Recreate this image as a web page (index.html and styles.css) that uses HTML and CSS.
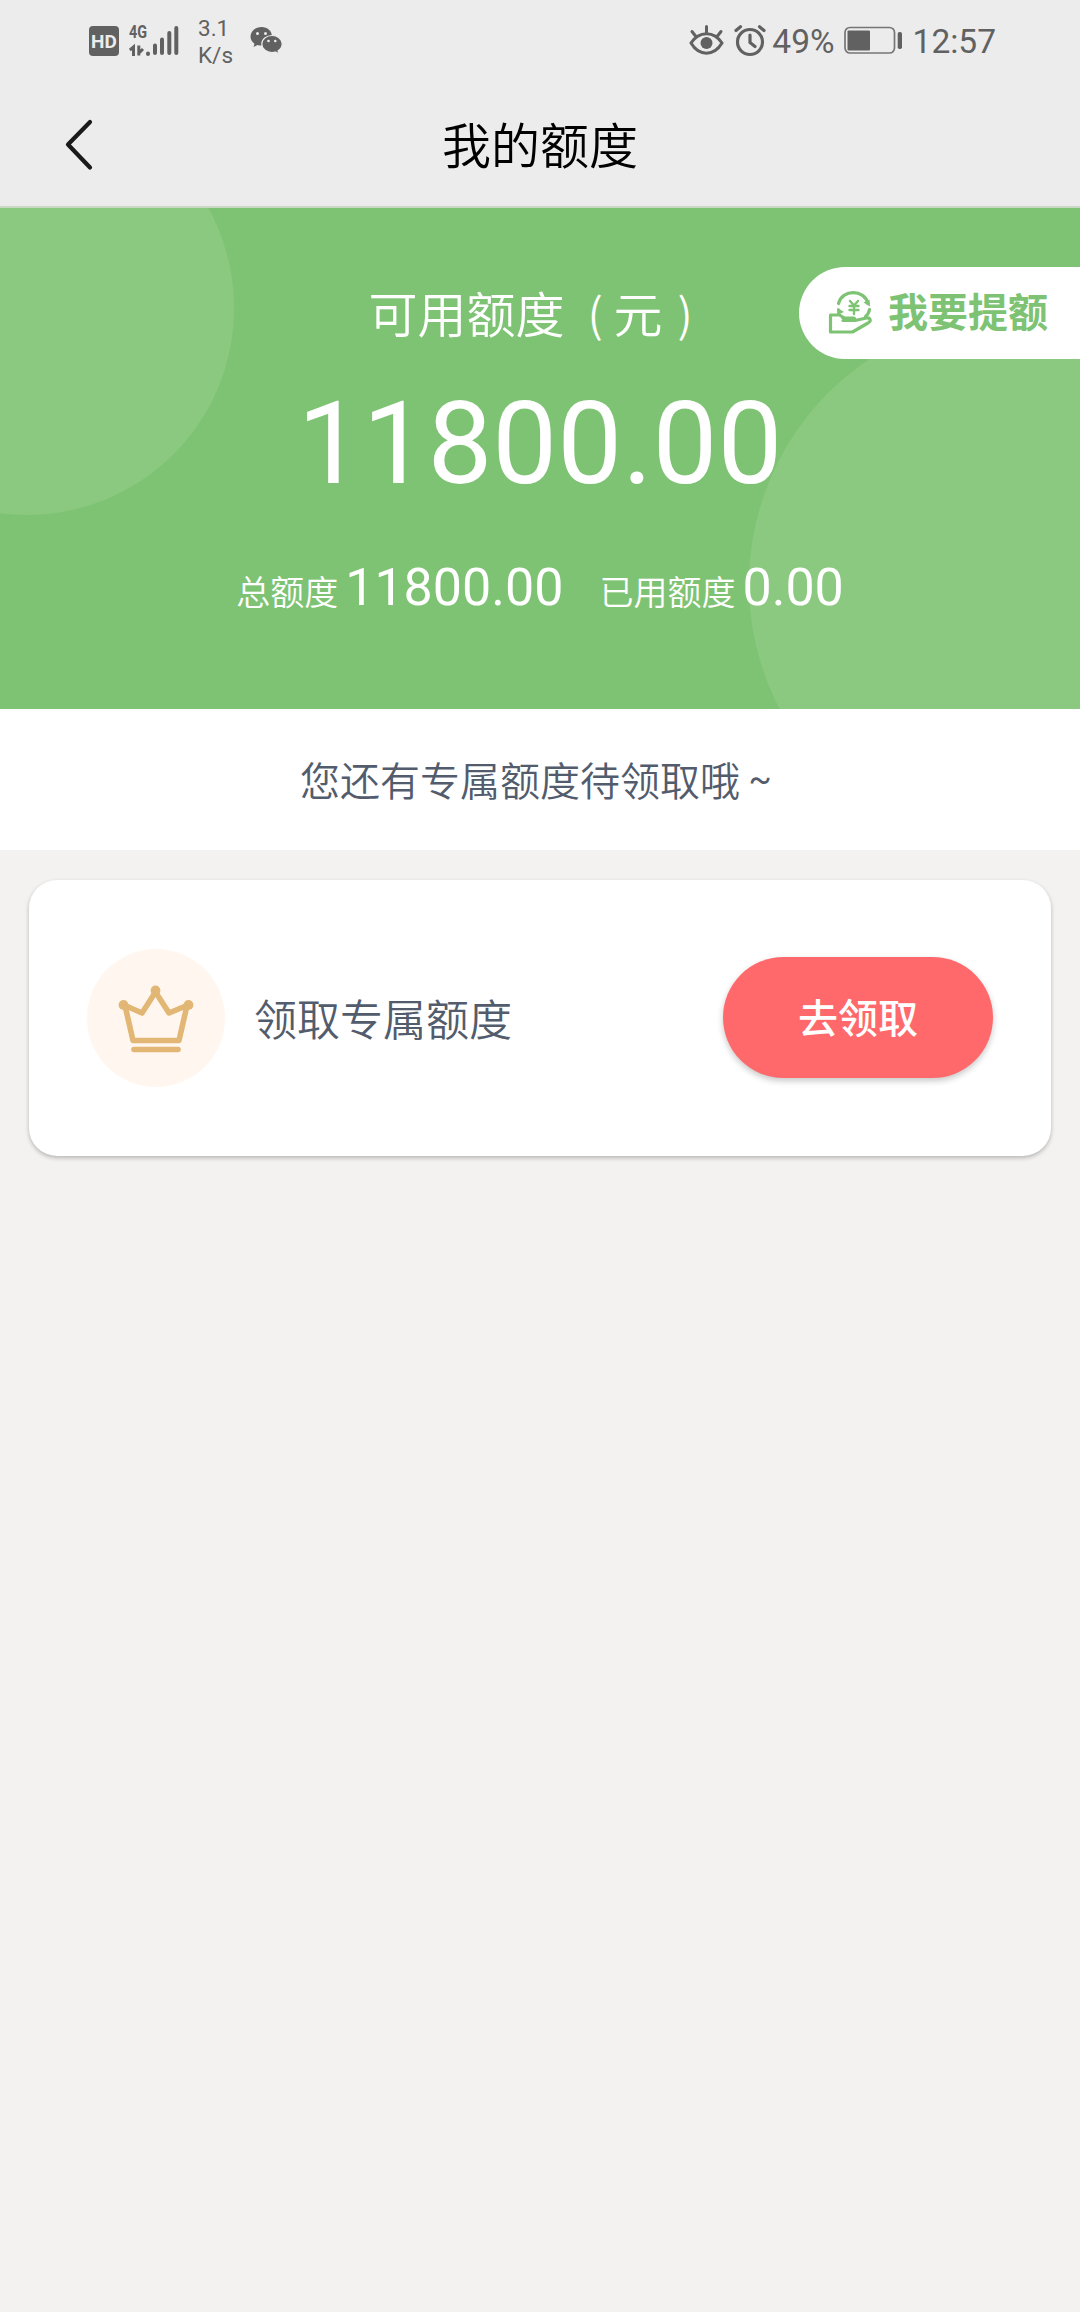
FILE: index.html
```html
<!DOCTYPE html>
<html lang="zh-CN">
<head>
    <meta charset="UTF-8">
    <meta name="viewport" content="width=device-width, initial-scale=1.0">
    <title>我的额度</title>
    <link rel="stylesheet" href="styles.css">
</head>
<body>

    <!-- Status bar -->
    <div class="status-bar">
        <div class="status-left">
            <div class="hd">HD</div>
            <div class="signal">
                <span class="network">4G</span>
                <svg width="52" height="34" viewBox="0 0 52 34" fill="none" stroke="#616161" stroke-width="4" stroke-linecap="round">
                    <path d="M19 29.500V30M26 21.500V29M33 15.500V29M40.300 9V29M47.300 4V29"/>
                    <path d="M.800 26L4.500 23V32M9.800 21.500V31.500M10 29L14 25" stroke-width="3" stroke-linecap="butt"/>
                </svg>
            </div>
            <div class="speed">3.1<br>K/s</div>
            <svg class="wechat" width="34" height="30" viewBox="0 0 34 30">
                <path fill="#616161" d="M11.500 1C5.200 1 .5 5.200.5 10.500c0 3 1.500 5.500 4 7.200L3.500 21l4-2c1.400.5 2.600.6 4 .6C17.500 19.600 22 15.500 22 10.300S17.500 1 11.500 1z"/>
                <path fill="#616161" stroke="#ececec" stroke-width="1.200" d="M22 9.500c-5.800 0-10.200 3.700-10.200 8.500s4.400 8.500 10.200 8.500c1.200 0 2.400-.2 3.500-.5l3.500 2-.9-3.200c2.600-1.700 4.100-4.100 4.100-6.800 0-4.800-4.500-8.500-10.200-8.500z"/>
                <g fill="#ececec"><circle cx="7.500" cy="7.500" r="1.500"/><circle cx="15.500" cy="7.500" r="1.500"/><circle cx="18.500" cy="15" r="1.300"/><circle cx="25.300" cy="15" r="1.300"/></g>
            </svg>
        </div>
        <div class="status-right">
            <svg width="35" height="32" viewBox="0 0 35 32" fill="none" stroke="#616161" stroke-width="3" stroke-linecap="round">
                <path d="M2 18C10 5.500 25 5.500 33 18C25 31.500 10 31.500 2 18zM17.500 1.500V7M3 6.500L6.500 11M32 6.500L28.500 11"/>
                <circle cx="17.500" cy="18" r="6" fill="#616161" stroke="none"/>
            </svg>
            <svg class="alarm" width="32" height="32" viewBox="0 0 32 32" fill="none" stroke="#616161" stroke-width="3.200" stroke-linecap="round">
                <circle cx="16" cy="17" r="12.500"/>
                <path d="M16 10V17.500L21 21.500M2 5.500L6.500 1.800M30 5.500L25.500 1.800"/>
            </svg>
            <span class="percent">49%</span>
            <svg class="battery" width="60" height="30" viewBox="0 0 60 30">
                <rect x="1" y="1.500" width="49.500" height="25.500" rx="5" fill="none" stroke="#757575" stroke-width="1.700"/>
                <rect x="3.500" y="4.500" width="22.500" height="20" rx="1" fill="#616161"/>
                <rect x="53.700" y="6" width="4.300" height="17" rx="1.800" fill="#616161"/>
            </svg>
            <span class="time">12:57</span>
        </div>
    </div>

    <header>
        <a class="back-button" href="#">
            <svg width="30" height="54" viewBox="0 0 30 54" fill="none" stroke="#1a1a1a" stroke-width="4.200" stroke-linecap="round" stroke-linejoin="round">
                <path d="M26 5L4 27.500L26 50.500"/>
            </svg>
        </a>
        <h1>我的额度</h1>
    </header>

    <!-- Available credit -->
    <div class="credit">
        <svg class="credit-bg" width="1080" height="501" viewBox="0 0 1080 501">
            <circle cx="27" cy="100" r="207"/>
            <circle cx="1019" cy="376" r="270"/>
        </svg>
        <div class="credit-content">
            <h2>可用额度<span>(</span>元<span>)</span></h2>
            <div class="amount">11800.00</div>
            <div class="credit-detail">
                <p>总额度<span>11800.00</span></p>
                <p>已用额度<span>0.00</span></p>
            </div>
        </div>
        <a class="raise-button" href="#">
            <svg width="46" height="46" viewBox="0 0 46 46" fill="none" stroke="#7ec373" stroke-width="3.200" stroke-linejoin="round" stroke-linecap="round">
                <path d="M14.500 27.500C18 28.500 22 28 25.500 28C27.500 28.500 27 30.500 25 30.500H15"/>
                <path d="M11.500 25H2.500V42H24.500L40 33C44 30.500 42 27.500 38.500 28L27 30.500M11.500 25L15.500 27.500"/>
                <path d="M10.500 13.500C14 -1 36.500 -1 40 13.500M11.500 22L10.500 20M41.500 19.500C41 22.500 39.500 25 37.500 26.500"/>
                <path d="M35.500 12.500L42 16.500L41.500 9.500zM9 25L9.500 18L16 22z" fill="#7ec373" stroke="none"/>
                <path d="M22 11L26 15.500L30 11M26 15.500V24M21.500 16H30.500M21.500 20H30.500" stroke-width="2.400"/>
            </svg>
            <span>我要提额</span>
        </a>
    </div>

    <div class="notice">您还有专属额度待领取哦<span>~</span></div>

    <!-- Exclusive credit card -->
    <div class="card">
        <div class="card-icon">
            <svg width="76" height="70" viewBox="0 0 76 70" fill="none" stroke="#e2b674" stroke-width="5.600" stroke-linejoin="round" stroke-linecap="round">
                <path d="M7 22.500L24 30L37.500 9L51 30L69 22.500L61 57.500H15z"/>
                <path d="M16 66.500H60"/>
                <g fill="#e2b674" stroke="none"><circle cx="5.500" cy="22" r="4.900"/><circle cx="37.500" cy="7.500" r="4.900"/><circle cx="70.500" cy="22" r="4.900"/></g>
            </svg>
        </div>
        <p>领取专属额度</p>
        <a class="btn" href="#">去领取</a>
    </div>

</body>
</html>
```
FILE: styles.css
```css
body {
    font-family: Roboto, "Noto Sans CJK SC", sans-serif;
    background-color: #f3f2f0;
    color: #525c6c;
    margin: 0;
    min-height: 2312px;
}

h1, h2, p {
    margin: 0;
    font-weight: 350;
}

a {
    text-decoration: none;
}

svg {
    display: block;
    flex: none;
}

.status-bar {
    display: flex;
    justify-content: space-between;
    box-sizing: border-box;
    height: 82px;
    padding: 0 84px 0 89px;
    background: #ececec;
    color: #616161;
}

.status-left, .status-right {
    display: flex;
    align-items: center;
}

.hd {
    width: 30px;
    height: 30px;
    border-radius: 4px;
    background: #616161;
    color: #ececec;
    font-size: 19px;
    font-weight: 700;
    line-height: 31px;
    text-align: center;
}

.signal {
    display: grid;
    margin-left: 10px;
}

.signal > * {
    grid-area: 1 / 1;
}

.network {
    font-size: 18px;
    font-weight: 700;
    line-height: 16px;
    transform: scaleX(0.8);
    transform-origin: left;
}

.speed {
    margin-left: 17px;
    padding-top: 2px;
    font-size: 22.500px;
    line-height: 27px;
}

.wechat {
    margin-left: 17px;
}

.alarm {
    margin-left: 10px;
}

.percent {
    margin-left: 6px;
    font-size: 33.500px;
}

.battery {
    margin-left: 9px;
}

.time {
    margin-left: 9px;
    font-size: 33.500px;
}

header {
    display: flex;
    align-items: center;
    height: 124px;
    background: #ececec;
    border-bottom: 2px solid #c9d9c6;
}

.back-button {
    width: 76px;
    padding-left: 64px;
}

header h1 {
    flex: 1;
    margin-right: 140px;
    padding-bottom: 3px;
    color: #000;
    font-size: 49px;
    text-align: center;
}

.credit {
    display: grid;
    height: 501px;
    background: #7ec373;
    color: #fff;
}

.credit > * {
    grid-area: 1 / 1;
}

.credit-bg {
    fill: #8bc980;
}

.credit-content {
    display: flex;
    flex-direction: column;
    align-items: center;
    padding-top: 73px;
}

.credit h2 {
    display: flex;
    font-size: 49px;
    line-height: 72px;
}

.credit h2 span {
    box-sizing: border-box;
    width: 49px;
    padding-left: 12px;
    font-family: "Noto Sans CJK SC", sans-serif;
    font-size: 46px;
    line-height: 62px;
    text-align: center;
}

.credit h2 span:last-child {
    padding: 0 4px 0 0;
}

.amount {
    margin-top: 21px;
    font-size: 115.500px;
    line-height: 140px;
}

.credit-detail {
    display: flex;
    gap: 36px;
    margin-top: 38px;
    font-size: 34px;
    line-height: 72px;
}

.credit-detail span {
    margin-left: 7px;
    font-size: 52px;
    font-weight: 400;
}

.raise-button {
    display: flex;
    align-items: center;
    justify-self: end;
    box-sizing: border-box;
    width: 281px;
    height: 92px;
    margin-top: 59px;
    padding-left: 29px;
    border-radius: 46px 0 0 46px;
    background: #fff;
    color: #7ec373;
    font-size: 40px;
    font-weight: 700;
    gap: 14px;
}

.raise-button span {
    padding-bottom: 6px;
}

.notice {
    display: flex;
    align-items: center;
    justify-content: center;
    box-sizing: border-box;
    height: 141px;
    padding-bottom: 2px;
    background: #fff;
    font-size: 40px;
    font-weight: 350;
}

.notice span {
    width: 40px;
    font-size: 34px;
    font-weight: 400;
    text-align: center;
}

.card {
    display: flex;
    align-items: center;
    box-sizing: border-box;
    height: 276px;
    margin: 30px 29px 0;
    padding: 0 58px;
    border-radius: 28px;
    background: #fff;
    box-shadow: 0 2px 4px rgba(0, 0, 0, 0.25);
}

.card-icon {
    display: flex;
    align-items: center;
    justify-content: center;
    width: 138px;
    height: 138px;
    border-radius: 50%;
    background: #fff7ef;
}

.card p {
    flex: 1;
    margin-left: 29px;
    padding-bottom: 2px;
    font-size: 43px;
}

.btn {
    box-sizing: border-box;
    width: 270px;
    height: 121px;
    margin-bottom: 2px;
    padding-top: 4px;
    border-radius: 61px;
    background: #ff696b;
    box-shadow: 0 3px 6px rgba(0, 0, 0, 0.22);
    color: #fff;
    font-size: 40px;
    font-weight: 500;
    line-height: 118px;
    text-align: center;
}
```
